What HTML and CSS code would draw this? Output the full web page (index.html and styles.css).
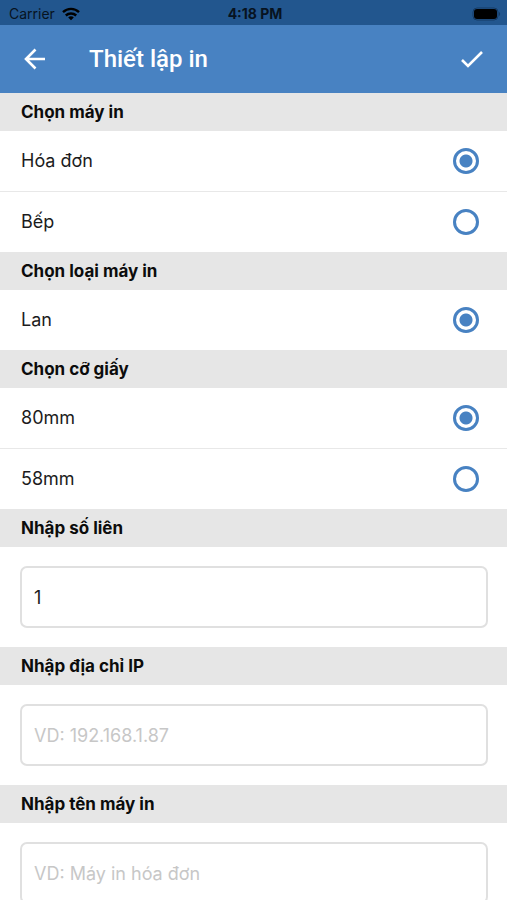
FILE: index.html
```
<!DOCTYPE html>
<html lang="vi">
<head>
<meta charset="utf-8">
<meta name="viewport" content="width=device-width, initial-scale=1">
<title>Thiết lập in</title>
<link rel="stylesheet" href="styles.css">
</head>
<body>
<div class="status">
  <div class="carrier">
    <span>Carrier</span>
    <svg class="wifi" viewBox="0 0 18 14" aria-hidden="true">
      <path d="M1 5.1a11.6 11.6 0 0 1 16 0" />
      <path d="M3.8 8.5a7.6 7.6 0 0 1 10.4 0" />
      <path class="solid" d="M9 9.3c1.100 0 2.100.4 2.800 1.100L9 13.300l-2.800-2.900c.7-.7 1.700-1.100 2.800-1.100z" />
    </svg>
  </div>
  <span class="time">4:18 PM</span>
  <svg class="battery" viewBox="0 0 29 14" aria-hidden="true">
    <rect class="shell" x="1" y="1" width="25" height="12" rx="4" />
    <rect x="2" y="2" width="23" height="10" rx="3" />
    <path class="cap" d="M27 5c1.500.5 1.500 3.500 0 4z" />
  </svg>
</div>
<header class="bar">
  <button class="icon-button" type="button" aria-label="Quay lại">
    <svg viewBox="0 0 24 24" aria-hidden="true"><path d="M22 12H3.500M12.500 2.500L3 12l9.500 9.500" /></svg>
  </button>
  <h1>Thiết lập in</h1>
  <button class="icon-button" type="button" aria-label="Lưu">
    <svg viewBox="0 0 24 24" aria-hidden="true"><path d="M2 13l6 6L22 5" /></svg>
  </button>
</header>
<form>
  <h2 id="printer">Chọn máy in</h2>
  <div class="options" role="radiogroup" aria-labelledby="printer">
    <label class="row"><span>Hóa đơn</span><input type="radio" name="printer" checked></label>
    <label class="row"><span>Bếp</span><input type="radio" name="printer"></label>
  </div>
  <h2 id="kind">Chọn loại máy in</h2>
  <div class="options" role="radiogroup" aria-labelledby="kind">
    <label class="row"><span>Lan</span><input type="radio" name="kind" checked></label>
  </div>
  <h2 id="paper">Chọn cỡ giấy</h2>
  <div class="options" role="radiogroup" aria-labelledby="paper">
    <label class="row"><span>80mm</span><input type="radio" name="paper" checked></label>
    <label class="row"><span>58mm</span><input type="radio" name="paper"></label>
  </div>
  <h2><label for="copies">Nhập số liên</label></h2>
  <div class="field"><input id="copies" type="text" inputmode="numeric" value="1"></div>
  <h2><label for="ip">Nhập địa chỉ IP</label></h2>
  <div class="field"><input id="ip" type="text" placeholder="VD: 192.168.1.87"></div>
  <h2><label for="name">Nhập tên máy in</label></h2>
  <div class="field"><input id="name" type="text" placeholder="VD: Máy in hóa đơn"></div>
</form>
</body>
</html>
```
FILE: styles.css
```
* {
  box-sizing: border-box;
}

html {
  scrollbar-width: none;
}

body {
  margin: 0;
  background: #fff;
  color: #1c1c1c;
  font-family: Inter, "Liberation Sans", sans-serif;
  font-size: 18px;
  line-height: 24px;
}

.status {
  display: grid;
  grid-template-columns: 1fr auto 1fr;
  align-items: center;
  height: 25px;
  padding: 2px 6px 0 9px;
  background: #22568e;
  color: #071321;
  font-size: 14px;
  line-height: 20px;
}

.carrier {
  display: flex;
  align-items: center;
  gap: 7px;
}

.wifi {
  width: 18px;
  height: 14px;
  fill: none;
  stroke: #000;
  stroke-width: 2.4;
}

.wifi .solid {
  fill: #000;
  stroke: none;
}

.time {
  font-weight: 700;
}

.battery {
  justify-self: end;
  width: 29px;
  height: 14px;
}

.battery .shell {
  fill: none;
  stroke: #153b65;
}

.battery .cap {
  fill: #153b65;
}

.bar {
  display: flex;
  align-items: center;
  height: 68px;
  padding: 0 16px;
  background: #4882c2;
  color: #fff;
}

.bar h1 {
  flex: 1;
  margin: 0 0 0 35px;
  font: 500 24px/32px Roboto, sans-serif;
}

.icon-button {
  display: grid;
  place-items: center;
  width: 38px;
  height: 38px;
  padding: 0;
  border: 0;
  background: none;
  color: inherit;
}

.icon-button svg {
  width: 24px;
  height: 24px;
  fill: none;
  stroke: currentColor;
  stroke-width: 2.6;
}

h2 {
  margin: 0;
  padding: 7px 21px;
  background: #e6e6e6;
  color: #0c0c0c;
  font-size: 17px;
  font-weight: 700;
  line-height: 24px;
}

.row {
  display: flex;
  align-items: center;
  justify-content: space-between;
  min-height: 60px;
  padding: 0 28px 0 21px;
}

.row + .row {
  min-height: 61px;
  border-top: 1px solid #e8e8e8;
}

.row input {
  appearance: none;
  width: 26px;
  height: 26px;
  margin: 0;
  border: 3px solid #4882c2;
  border-radius: 50%;
}

.row input:checked {
  background: radial-gradient(circle, #4882c2 6px, transparent 7px);
}

.field {
  padding: 19px 19px 19px 20px;
}

.field input {
  display: block;
  width: 100%;
  height: 62px;
  padding: 0 12px;
  border: 2px solid #e0e0e0;
  border-radius: 7px;
  background: #fff;
  color: #1c1c1c;
  font: inherit;
}

.field input::placeholder {
  color: #c7c7c7;
  opacity: 1;
}
```
